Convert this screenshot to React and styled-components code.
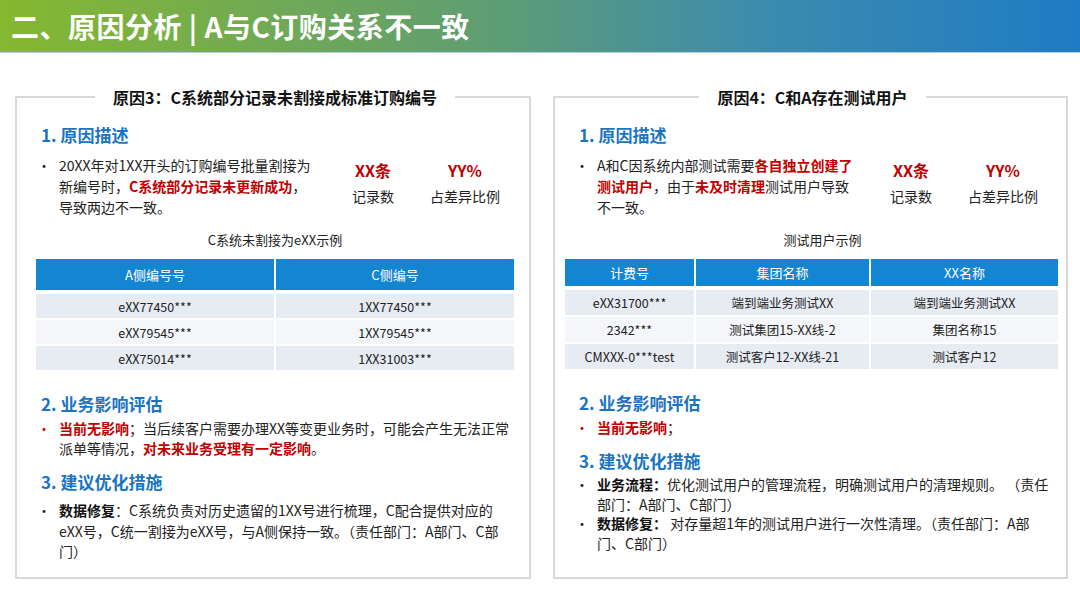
import React from "react";
import styled, { createGlobalStyle } from "styled-components";

const Global = createGlobalStyle`
  html, body { margin: 0; padding: 0; background: #fff; }
  body { font-family: "Noto Sans CJK SC", "Noto Sans", sans-serif; color: #222; }
`;

const Page = styled.div`
  width: 1080px; height: 589px; overflow: hidden; display: flex; flex-direction: column;
`;
const Header = styled.div`
  height: 52px; flex: none; display: flex; align-items: center; padding-left: 11px;
  background: linear-gradient(90deg, #86b830 0%, #5f9e72 45%, #3d8cae 70%, #1f7bc4 100%);
  border-bottom: 1px solid #b8d0d8;
`;
const HTitle = styled.h1`
  margin: 0; color: #fff; font-size: 28px; font-weight: 700; letter-spacing: 0.5px;
`;
const Body = styled.div`
  flex: 1; display: grid; grid-template-columns: 516px 515px; column-gap: 22px;
  padding: 34px 0 0 15px;
`;
const Panel = styled.fieldset`
  margin: 0; border: 2px solid #d9d9d9; padding: 0 14px 0 18px; height: 492px; box-sizing: border-box;
  display: flex; flex-direction: column; min-width: 0;
`;
const Legend = styled.legend`
  margin: 0 auto; padding: 0 18px; font-size: 16px; font-weight: 700; color: #111; line-height: 20px;
`;
const SecHead = styled.div`
  color: #1a74c2; font-size: 17px; font-weight: 700; line-height: 24px; margin: ${p => p.$m || "0"};
  padding-left: 6px;
`;
const DescRow = styled.div`
  display: flex; align-items: flex-start; margin-top: 8px;
`;
const Bullet = styled.div`
  position: relative; padding-left: 24px; font-size: 14px; line-height: ${p => p.$lh || "21px"};
  width: ${p => p.$w || "auto"}; flex: none; color: #222;
  &::before { content: "•"; position: absolute; left: 2px; top: 0; color: ${p => p.$dot || "#222"}; }
`;
const Red = styled.span` color: #c00000; font-weight: 700; `;
const B = styled.span` font-weight: 700; color: #111; `;
const Stats = styled.div`
  display: flex; margin-left: ${p => p.$ml}; margin-top: 4px;
`;
const Stat = styled.div`
  width: 92px; display: flex; flex-direction: column; align-items: center; gap: 4px;
`;
const StatNum = styled.div` color: #c00000; font-weight: 700; font-size: 16px; line-height: 22px; `;
const StatLbl = styled.div` font-size: 14px; line-height: 22px; color: #222; `;
const Caption = styled.div`
  text-align: center; font-size: 13px; margin: 12px 0 9px; line-height: 20px; color: #222;
  padding-left: ${p => p.$pl || "0"};
`;
const Table = styled.div`
  display: grid; grid-template-columns: ${p => p.$cols}; gap: 2px; margin: ${p => p.$m};
`;
const Th = styled.div`
  background: #1485d0; color: #fff; font-size: 13px; height: ${p => p.$h || "31px"};
  display: flex; align-items: center; justify-content: center; margin-bottom: 2px;
`;
const Td = styled.div`
  background: ${p => (p.$alt ? "#f5f6fa" : "#e7ebf2")}; font-size: 12.5px; height: ${p => p.$h || "24px"};
  display: flex; align-items: center; justify-content: center; color: #222;
`;

const leftRows = [
  ["eXX77450***", "1XX77450***"],
  ["eXX79545***", "1XX79545***"],
  ["eXX75014***", "1XX31003***"],
];
const rightRows = [
  ["eXX31700***", "端到端业务测试XX", "端到端业务测试XX"],
  ["2342***", "测试集团15-XX线-2", "集团名称15"],
  ["CMXXX-0***test", "测试客户12-XX线-21", "测试客户12"],
];

export default function App() {
  return (
    <Page>
      <Global />
      <Header><HTitle>二、原因分析 | A与C订购关系不一致</HTitle></Header>
      <Body>
        <Panel>
          <Legend>原因3：C系统部分记录未割接成标准订购编号</Legend>
          <SecHead $m="16px 0 0">1. 原因描述</SecHead>
          <DescRow>
            <Bullet $w="258px">20XX年对1XX开头的订购编号批量割接为新编号时，<Red>C系统部分记录未更新成功</Red>，导致两边不一致。</Bullet>
            <Stats $ml="10px"><Stat><StatNum>XX条</StatNum><StatLbl>记录数</StatLbl></Stat><Stat><StatNum>YY%</StatNum><StatLbl>占差异比例</StatLbl></Stat></Stats>
          </DescRow>
          <Caption>C系统未割接为eXX示例</Caption>
          <Table $cols="238px 238px" $m="0 0 0 1px">
            <Th>A侧编号号</Th><Th>C侧编号</Th>
            {leftRows.map((r, i) => r.map((c, j) => <Td key={i + "-" + j} $alt={i === 1} $h="24px">{c}</Td>))}
          </Table>
          <SecHead $m="22px 0 2px">2. 业务影响评估</SecHead>
          <Bullet $dot="#c00000" $lh="20px"><Red>当前无影响</Red>；当后续客户需要办理XX等变更业务时，可能会产生无法正常派单等情况，<Red>对未来业务受理有一定影响</Red>。</Bullet>
          <SecHead $m="12px 0 6px">3. 建议优化措施</SecHead>
          <Bullet $lh="20.5px"><B>数据修复</B>：C系统负责对历史遗留的1XX号进行梳理，C配合提供对应的eXX号，C统一割接为eXX号，与A侧保持一致。（责任部门：A部门、C部门）</Bullet>
        </Panel>
        <Panel>
          <Legend>原因4：C和A存在测试用户</Legend>
          <SecHead $m="16px 0 0">1. 原因描述</SecHead>
          <DescRow>
            <Bullet $w="258px">A和C因系统内部测试需要<Red>各自独立创建了测试用户</Red>，由于<Red>未及时清理</Red>测试用户导致不一致。</Bullet>
            <Stats $ml="10px"><Stat><StatNum>XX条</StatNum><StatLbl>记录数</StatLbl></Stat><Stat><StatNum>YY%</StatNum><StatLbl>占差异比例</StatLbl></Stat></Stats>
          </DescRow>
          <Caption $pl="20px">测试用户示例</Caption>
          <Table $cols="129px 173px 187px" $m="0 0 0 -8px">
            <Th $h="27px">计费号</Th><Th $h="27px">集团名称</Th><Th $h="27px">XX名称</Th>
            {rightRows.map((r, i) => r.map((c, j) => <Td key={i + "-" + j} $alt={i === 1} $h="25px">{c}</Td>))}
          </Table>
          <SecHead $m="22px 0 2px">2. 业务影响评估</SecHead>
          <Bullet $dot="#c00000" $lh="20px"><Red>当前无影响</Red>；</Bullet>
          <SecHead $m="12px 0 2px">3. 建议优化措施</SecHead>
          <Bullet $lh="19.5px"><B>业务流程：</B>优化测试用户的管理流程，明确测试用户的清理规则。 （责任部门：A部门、C部门）</Bullet>
          <Bullet $lh="19.5px"><B>数据修复：</B> 对存量超1年的测试用户进行一次性清理。（责任部门：A部门、C部门）</Bullet>
        </Panel>
      </Body>
    </Page>
  );
}
